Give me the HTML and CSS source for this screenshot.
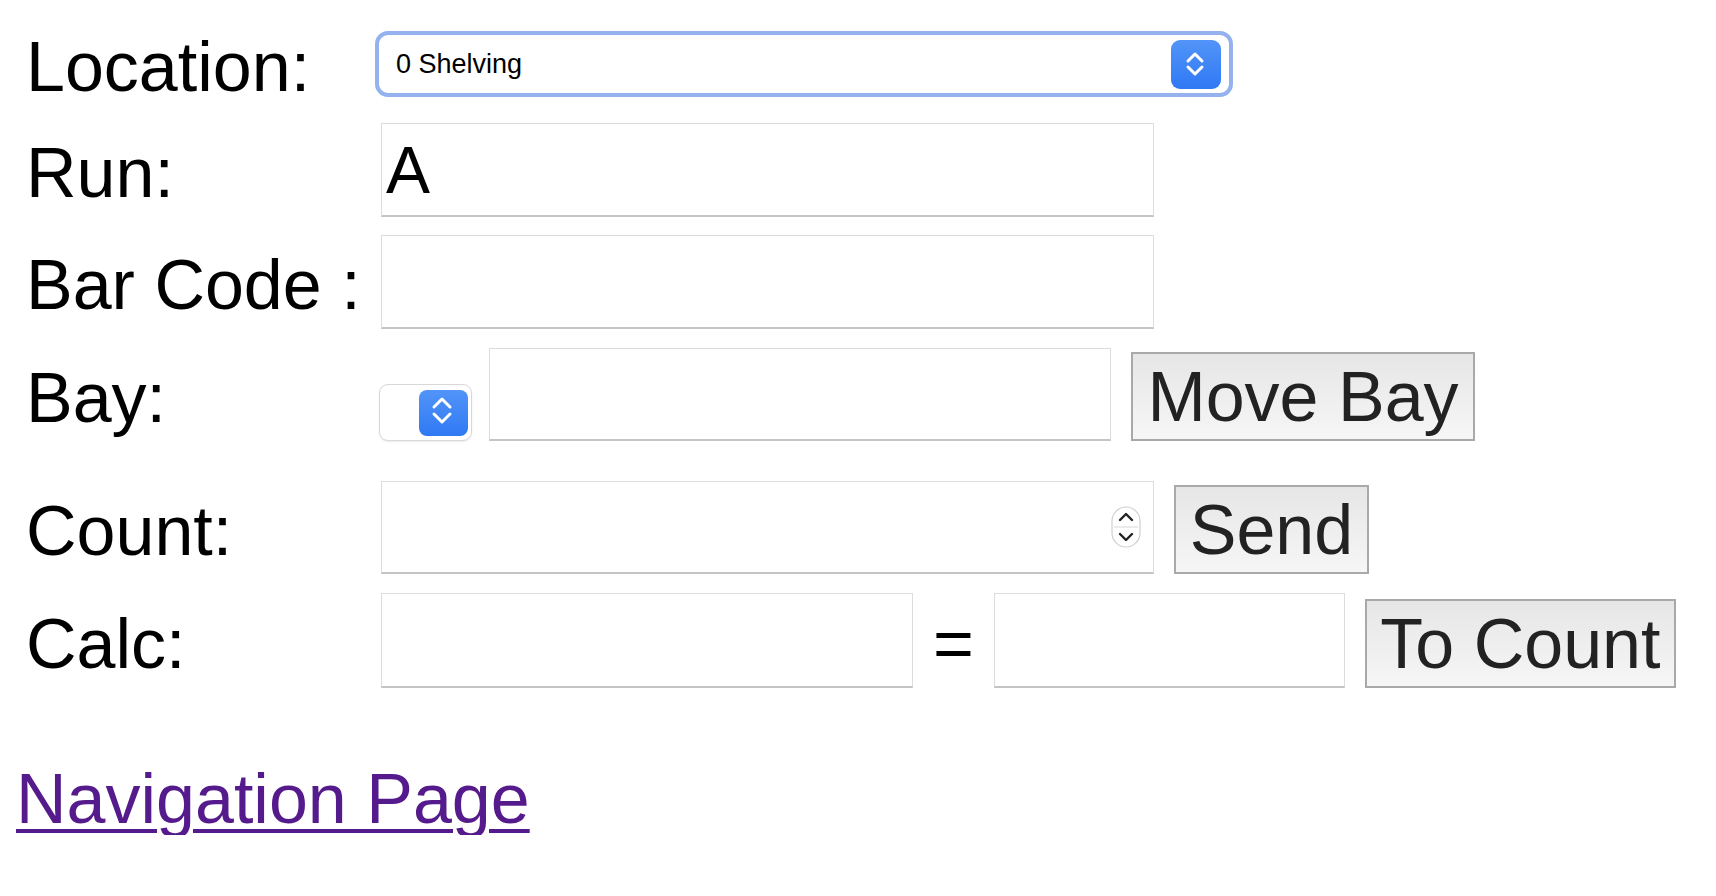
FILE: index.html
```html
<!DOCTYPE html>
<html lang="en">
<head>
<meta charset="utf-8">
<title>Stock Count</title>
<link rel="stylesheet" href="styles.css">
</head>
<body>
<form class="count-form">
  <div class="row row-location">
    <label class="label">Location:</label>
    <div class="field">
      <div class="select-box">
        <select class="select"><option>0 Shelving</option></select>
        <span class="select-btn">
          <svg width="50" height="49" viewBox="0 0 50 49"><path d="M17 21 L24 14 L31 21 M17 27 L24 34 L31 27" fill="none" stroke="#fff" stroke-width="3" stroke-linecap="round" stroke-linejoin="round"/></svg>
        </span>
      </div>
    </div>
  </div>

  <div class="row row-run">
    <label class="label">Run:</label>
    <div class="field">
      <input class="text-input wide" type="text" value="A">
    </div>
  </div>

  <div class="row row-barcode">
    <label class="label">Bar Code :</label>
    <div class="field">
      <input class="text-input wide" type="text">
    </div>
  </div>

  <div class="row row-bay">
    <label class="label">Bay:</label>
    <div class="field">
      <div class="mini-select">
        <span class="mini-btn">
          <svg width="49" height="46" viewBox="0 0 49 46"><path d="M15 17 L23 9 L31 17 M15 24 L23 32 L31 24" fill="none" stroke="#fff" stroke-width="3" stroke-linecap="round" stroke-linejoin="round"/></svg>
        </span>
      </div>
      <input class="text-input bay-input" type="text">
      <button type="button" class="btn btn-move">Move Bay</button>
    </div>
  </div>

  <div class="row row-count">
    <label class="label">Count:</label>
    <div class="field">
      <div class="number-wrap">
        <input class="text-input wide" type="text">
        <span class="spinner">
          <svg width="30" height="42" viewBox="0 0 30 42"><rect x="1" y="1" width="28" height="40" rx="14" fill="#fff" stroke="#cfcfcf" stroke-width="1.2"/><line x1="3" y1="21" x2="27" y2="21" stroke="#dedede" stroke-width="1.2"/><path d="M9 14 L15 8 L21 14 M9 28 L15 34 L21 28" fill="none" stroke="#222" stroke-width="2.4" stroke-linecap="round" stroke-linejoin="round"/></svg>
        </span>
      </div>
      <button type="button" class="btn btn-send">Send</button>
    </div>
  </div>

  <div class="row row-calc">
    <label class="label">Calc:</label>
    <div class="field">
      <input class="text-input calc-a" type="text">
      <span class="equals">=</span>
      <input class="text-input calc-b" type="text">
      <button type="button" class="btn btn-tocount">To Count</button>
    </div>
  </div>
</form>
<a class="nav-link" href="#">Navigation Page</a>
</body>
</html>
```

FILE: styles.css
```css
html, body {
  margin: 0;
  padding: 0;
  background: #fff;
}

body {
  font-family: "Liberation Sans", Arial, Helvetica, sans-serif;
  color: #000;
}

.count-form {
  display: flex;
  flex-direction: column;
  padding: 31px 0 0 26px;
  margin: 0;
}

.row {
  display: flex;
  align-items: center;
}

.row-run { margin-top: 26px; }
.row-barcode { margin-top: 18px; }
.row-bay { margin-top: 19px; }
.row-count { margin-top: 40px; }
.row-calc { margin-top: 19px; }

.label {
  width: 355px;
  flex: none;
  font-size: 70px;
  line-height: 58px;
  padding-top: 6px;
  white-space: nowrap;
}

.field {
  display: flex;
  align-items: flex-end;
  gap: 20px;
}

/* Location select with focus ring */
.select-box {
  box-sizing: border-box;
  width: 858px;
  height: 66px;
  margin-left: -6px;
  border: 4px solid #94b3ee;
  border-radius: 13px;
  background: #fff;
  display: flex;
  align-items: center;
  padding-right: 8px;
}

.select {
  flex: 1;
  appearance: none;
  -webkit-appearance: none;
  border: none;
  outline: none;
  background: transparent;
  font-family: "Liberation Sans", Arial, sans-serif;
  font-size: 27px;
  color: #000;
  padding: 0 0 0 17px;
  height: 100%;
}

.select-btn {
  width: 50px;
  height: 49px;
  border-radius: 9px;
  background: linear-gradient(#5294f8, #2f79f4);
  display: flex;
}

/* Text inputs */
.text-input {
  box-sizing: border-box;
  height: 94px;
  border: 1px solid #dcdcdc;
  border-bottom: 2px solid #c4c4c4;
  background: #fff;
  font-family: "Liberation Sans", Arial, sans-serif;
  font-size: 66px;
  padding: 0 4px;
  color: #000;
  outline: none;
  margin: 0;
}

.wide { width: 773px; }
.bay-input { width: 622px; height: 93px; }
.calc-a { width: 532px; height: 95px; }
.calc-b { width: 351px; height: 95px; }

.number-wrap {
  position: relative;
  display: flex;
}

.row-count .text-input { height: 93px; }

.spinner {
  position: absolute;
  right: 13px;
  top: 25px;
  display: flex;
}

/* Small bay select */
.mini-select {
  box-sizing: border-box;
  width: 93px;
  height: 57px;
  margin-left: -2px;
  margin-right: -3px;
  border: 1px solid #d8d8d8;
  border-radius: 9px;
  background: #fff;
  box-shadow: 0 1px 2px rgba(0, 0, 0, 0.08);
  display: flex;
  justify-content: flex-end;
  align-items: flex-start;
  padding: 5px 3px 0 0;
}

.mini-btn {
  width: 49px;
  height: 46px;
  border-radius: 8px;
  background: linear-gradient(#5294f8, #2f79f4);
  display: flex;
}

/* Buttons */
.btn {
  box-sizing: border-box;
  height: 89px;
  border: 2px solid #a9a9a9;
  border-radius: 0;
  background: linear-gradient(#e6e6e6, #f6f6f6);
  color: #222;
  font-family: "Liberation Sans", Arial, sans-serif;
  font-size: 70px;
  line-height: 1;
  padding: 0;
  margin: 0;
  text-align: center;
}

.btn-move { width: 344px; }
.btn-send { width: 195px; }
.btn-tocount { width: 311px; }

.equals {
  font-size: 70px;
  line-height: 1;
  align-self: center;
  padding-top: 6px;
}

.nav-link {
  display: inline-block;
  margin: 75px 0 0 16px;
  font-size: 70px;
  line-height: 72px;
  color: #551a8b;
  text-decoration: underline;
  text-decoration-thickness: 4px;
  text-underline-offset: 6px;
}
```
